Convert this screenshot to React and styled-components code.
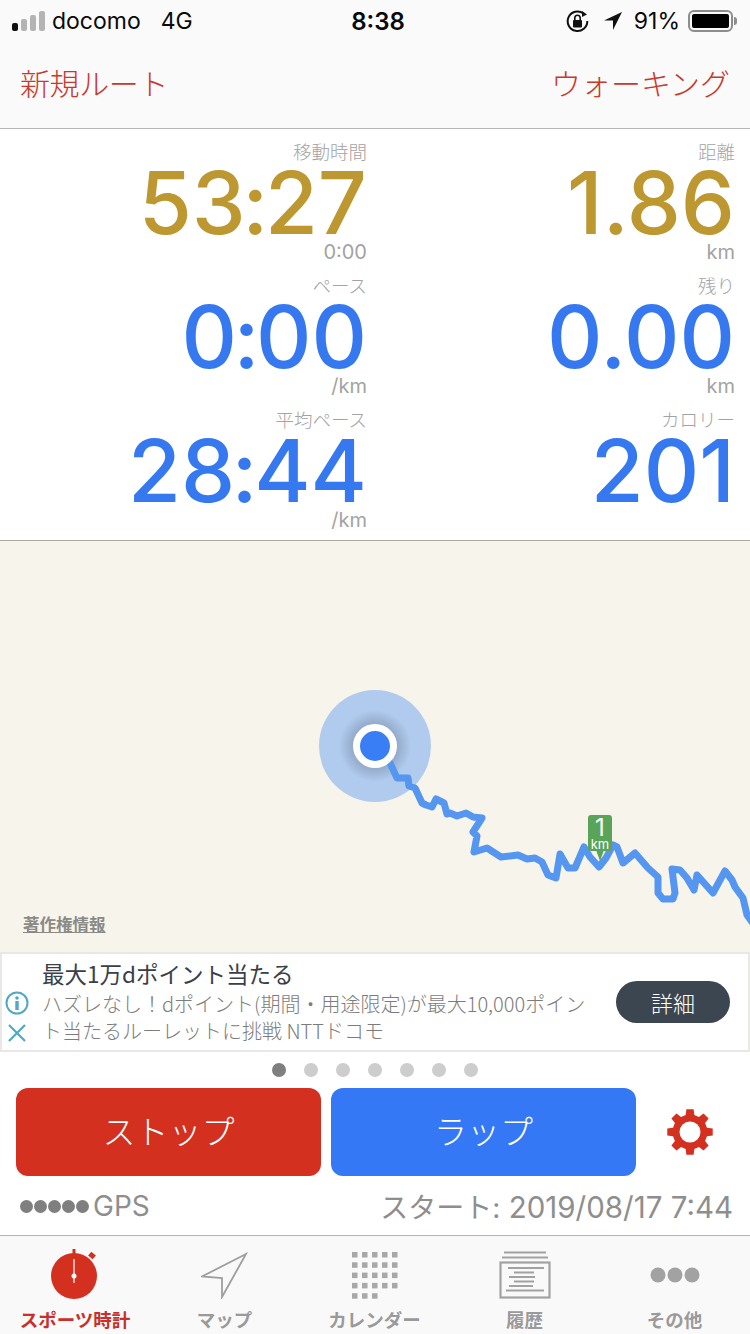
import React from "react";
import styled, { createGlobalStyle } from "styled-components";

const Global = createGlobalStyle`
  html, body { margin: 0; padding: 0; background: #fff; }
  body { font-family: Inter, "Noto Sans CJK JP", sans-serif; }
  * { box-sizing: border-box; }
`;

const Page = styled.div`
  width: 750px;
  height: 1334px;
  overflow: hidden;
  display: flex;
  flex-direction: column;
  background: #fff;
`;

const Header = styled.header`
  background: #fafafa;
  height: 129px;
  border-bottom: 1px solid #b4b4b4;
  flex: none;
`;

const StatusBar = styled.div`
  height: 42px;
  padding: 0 17px 0 12px;
  display: grid;
  grid-template-columns: 1fr auto 1fr;
  align-items: center;
  color: #0a0a0a;
  font-size: 23px;
`;

const StatusLeft = styled.div`
  display: flex;
  align-items: center;
  gap: 7px;
`;

const Carrier = styled.span`
  margin-right: 13px;
`;

const Time = styled.div`
  font-size: 24px;
  font-weight: 600;
  padding-left: 11px;
`;

const StatusRight = styled.div`
  display: flex;
  justify-content: flex-end;
  align-items: center;
`;

const Percent = styled.span`
  margin: 0 8px 0 12px;
`;

const Battery = styled.div`
  width: 45px;
  height: 22px;
  border: 2px solid #8c8c8c;
  border-radius: 6px;
  padding: 2px;
  position: relative;
  &::after {
    content: "";
    position: absolute;
    right: -6px;
    top: 5px;
    width: 3px;
    height: 8px;
    border-radius: 0 3px 3px 0;
    background: #8c8c8c;
  }
`;

const BatteryFill = styled.div`
  height: 100%;
  background: #000;
  border-radius: 2px;
`;

const NavBar = styled.nav`
  height: 86px;
  padding: 0 20px 6px 20px;
  display: flex;
  justify-content: space-between;
  align-items: center;
  color: #c9382c;
  font-family: "Noto Sans CJK JP", sans-serif;
  font-size: 30px;
  font-weight: 300;
`;

const NavRoute = styled.span`
  letter-spacing: -0.4px;
`;

const Stats = styled.section`
  flex: none;
  height: 412px;
  padding: 10px 15px 0 0;
  display: grid;
  grid-template-columns: 367px 1fr;
  grid-auto-rows: 134px;
  border-bottom: 1px solid #a8a8a0;
`;

const Stat = styled.div`
  text-align: right;
`;

const StatLabel = styled.div`
  height: 24px;
  line-height: 24px;
  font-family: "Noto Sans CJK JP", sans-serif;
  font-weight: 300;
  font-size: 18.5px;
  color: #a3a3a3;
`;

const StatValue = styled.div`
  height: 77px;
  line-height: 80px;
  font-size: 86px;
  font-weight: 450;
  color: ${(p) => (p.$tone === "gold" ? "#bd9730" : "#3578f0")};
`;

const Colon = styled.span`
  margin: 0 -3.5px;
`;

const StatSub = styled.div`
  height: 24px;
  line-height: 24px;
  font-size: 20px;
  color: #a3a3a3;
`;

const MapArea = styled.section`
  position: relative;
  flex: none;
  height: 411px;
  background: #f7f4ec;
  overflow: hidden;
`;

const Halo = styled.div`
  position: absolute;
  left: 319px;
  top: 149px;
  width: 112px;
  height: 112px;
  border-radius: 50%;
  background: radial-gradient(circle, #94abca 0, #94abca 22px, #b0cbee 36px);
`;

const RouteSvg = styled.svg`
  position: absolute;
  inset: 0;
  width: 750px;
  height: 411px;
`;

const Dot = styled.div`
  position: absolute;
  left: 353px;
  top: 183px;
  width: 44px;
  height: 44px;
  border-radius: 50%;
  background: #3a7ef6;
  border: 7px solid #fff;
`;

const Pin = styled.div`
  position: absolute;
  left: 588px;
  top: 274px;
  width: 24px;
  height: 36px;
  border-radius: 3px;
  background: #5aa45a;
  color: #fff;
  text-align: center;
  &::after {
    content: "";
    position: absolute;
    left: 8px;
    top: 35px;
    border-left: 4px solid transparent;
    border-right: 4px solid transparent;
    border-top: 11px solid #5aa45a;
  }
`;

const PinNum = styled.div`
  font-size: 24px;
  line-height: 23px;
  margin-top: 1px;
`;

const PinUnit = styled.div`
  font-size: 13px;
  line-height: 11px;
`;

const Attribution = styled.div`
  position: absolute;
  left: 23px;
  top: 373px;
  font-family: "Noto Sans CJK JP", sans-serif;
  font-size: 16.5px;
  line-height: 20px;
  font-weight: 700;
  color: #8a8a86;
  text-decoration: underline;
`;

const Ad = styled.section`
  flex: none;
  height: 100px;
  background: #fff;
  border: 2px solid #e8e8e6;
  display: grid;
  grid-template-columns: 30px 1fr auto;
  font-family: "Noto Sans CJK JP", sans-serif;
`;

const AdIcons = styled.div`
  display: flex;
  flex-direction: column;
  align-items: center;
  padding-top: 37px;
  gap: 8px;
`;

const AdText = styled.div`
  padding: 3px 0 0 10px;
`;

const AdTitle = styled.div`
  font-size: 22.5px;
  line-height: 32px;
  font-weight: 400;
  color: #3a4048;
`;

const AdBody = styled.div`
  width: 550px;
  margin-top: 1px;
  font-size: 20px;
  line-height: 27px;
  font-weight: 300;
  color: #7c7c7c;
`;

const AdAction = styled.div`
  display: flex;
  align-items: center;
  padding: 0 18px 0 0;
`;

const AdButton = styled.button`
  width: 114px;
  height: 42px;
  border: 0;
  padding: 0;
  border-radius: 21px;
  background: #3b4650;
  color: #fff;
  font-family: inherit;
  font-size: 22px;
  font-weight: 300;
`;

const Pager = styled.div`
  flex: none;
  height: 36px;
  display: flex;
  justify-content: center;
  align-items: center;
  gap: 18px;
`;

const PagerDot = styled.span`
  width: 14px;
  height: 14px;
  border-radius: 50%;
  background: ${(p) => (p.$active ? "#7f7f7f" : "#cdcdcd")};
`;

const Controls = styled.div`
  flex: none;
  height: 88px;
  padding-left: 16px;
  display: grid;
  grid-template-columns: 305px 305px 1fr;
  column-gap: 10px;
`;

const BigButton = styled.button`
  border: 0;
  border-radius: 12px;
  padding: 0 0 4px;
  background: ${(p) => p.$bg};
  color: #fff;
  font-family: "Noto Sans CJK JP", sans-serif;
  font-size: 33px;
  font-weight: 300;
`;

const GearSlot = styled.div`
  display: flex;
  align-items: center;
  justify-content: center;
  padding-right: 16px;
`;

const InfoRow = styled.div`
  flex: none;
  height: 59px;
  padding: 1px 17px 0 20px;
  display: flex;
  justify-content: space-between;
  align-items: center;
  font-size: 28px;
  color: #8e8e8e;
`;

const GpsGroup = styled.div`
  display: flex;
  align-items: center;
  gap: 4px;
`;

const GpsDots = styled.div`
  display: flex;
  gap: 1px;
`;

const GpsDot = styled.span`
  width: 13px;
  height: 13px;
  border-radius: 50%;
  background: #7f7f7f;
`;

const StartText = styled.div`
  font-size: 29.5px;
`;

const StartLabel = styled.span`
  font-size: 28px;
`;

const TabBar = styled.nav`
  flex: 1;
  background: #f9f9f9;
  border-top: 1px solid #b4b4b4;
  display: grid;
  grid-template-columns: 150px 149px 151px 149px 151px;
`;

const Tab = styled.div`
  display: flex;
  flex-direction: column;
  align-items: center;
  padding-top: 13px;
`;

const TabIcon = styled.div`
  height: 52px;
  display: flex;
  align-items: center;
  justify-content: center;
`;

const TabLabel = styled.div`
  margin-top: 5px;
  font-family: "Noto Sans CJK JP", sans-serif;
  font-size: 18.5px;
  line-height: 26px;
  font-weight: 700;
  color: ${(p) => (p.$active ? "#c9302a" : "#9a9a9a")};
`;

const routePoints =
  "390,763 397,778 408,778 409,786 415,788 422,803 426,805 432,807 436,799 444,803 447,814 450,813 457,816 466,813 473,817 482,818 473,832 477,836 474,852 487,848 501,857 518,855 527,859 535,858 542,862 548,875 556,878 560,854 568,868 575,868 584,847 590,857 599,867 606,858 613,845 617,847 623,863 635,853 648,868 658,877 658,893 663,899 673,899 675,893 672,869 680,870 687,878 694,890 697,875 713,893 725,871 732,880 735,887 743,898 747,915 752,922";

function gearPath(cx, cy, teeth, rOut, rIn) {
  const pts = [];
  const step = (Math.PI * 2) / teeth;
  for (let i = 0; i < teeth; i++) {
    const a = i * step - Math.PI / 2;
    const w = step * 0.2;
    const g = step * 0.32;
    [[a - g, rIn], [a - w, rOut], [a + w, rOut], [a + g, rIn]].forEach(([t, r]) =>
      pts.push(`${(cx + r * Math.cos(t)).toFixed(2)} ${(cy + r * Math.sin(t)).toFixed(2)}`)
    );
  }
  return `M${pts.join("L")}Z`;
}

const Signal = () => (
  <svg width="33" height="22" viewBox="0 0 33 22">
    <rect x="0" y="13" width="6" height="8" rx="2" fill="#111" />
    <rect x="9" y="9" width="6" height="12" rx="2" fill="#b4b4b4" />
    <rect x="18" y="5" width="6" height="16" rx="2" fill="#b4b4b4" />
    <rect x="27" y="1" width="6" height="20" rx="2" fill="#b4b4b4" />
  </svg>
);

const LockRotate = () => (
  <svg width="23" height="23" viewBox="0 0 23 23">
    <path d="M17.5 3.5A9.8 9.8 0 1 0 21.3 11" fill="none" stroke="#111" strokeWidth="2" />
    <path d="M16 1l5 3.5-5 2.5z" fill="#111" />
    <rect x="7" y="10" width="9" height="7.5" rx="1" fill="#111" />
    <path d="M8.8 10V8a2.7 2.7 0 0 1 5.4 0v2" fill="none" stroke="#111" strokeWidth="1.6" />
  </svg>
);

const LocationArrow = () => (
  <svg width="18" height="18" viewBox="0 0 18 18" style={{ marginLeft: 15 }}>
    <path d="M18 0L0 8.5h9V18z" fill="#111" />
  </svg>
);

const Gear = () => (
  <svg width="46" height="46" viewBox="0 0 46 46">
    <path d={gearPath(23, 23, 8, 23, 17.5)} fill="#d33020" />
    <circle cx="23" cy="23" r="10.5" fill="#fff" />
  </svg>
);

const Stopwatch = () => (
  <svg width="52" height="52" viewBox="0 0 52 52">
    <rect x="23.5" y="0" width="3" height="5" fill="#d33020" />
    <rect x="40" y="4" width="6" height="5" transform="rotate(40 43 6.5)" fill="#d33020" />
    <circle cx="25" cy="27" r="23" fill="#d33020" />
    <rect x="24.4" y="10" width="1.2" height="24" fill="#fff" />
    <circle cx="25" cy="27" r="2.5" fill="#fff" />
  </svg>
);

const MapIcon = () => (
  <svg width="47" height="47" viewBox="0 0 47 47">
    <path d="M45 2L1 24.5l20 1.5L21 45z" fill="none" stroke="#9e9e9e" strokeWidth="1.8" strokeLinejoin="miter" />
  </svg>
);

const CalendarIcon = () => {
  const cells = [];
  for (let r = 0; r < 5; r++) {
    for (let c = 0; c < (r === 4 ? 3 : 5); c++) {
      cells.push(<rect key={`${r}-${c}`} x={c * 10} y={r * 10.3} width="5.5" height="5.5" fill="#a8a8a8" />);
    }
  }
  return (
    <svg width="46" height="47" viewBox="0 0 46 47">
      {cells}
    </svg>
  );
};

const HistoryIcon = () => (
  <svg width="52" height="48" viewBox="0 0 52 48" fill="none" stroke="#a2a2a2">
    <path d="M5 1.5h42M3 6.5h46" strokeWidth="2" />
    <rect x="1.5" y="11.5" width="49" height="35" strokeWidth="2.2" />
    <path d="M9 17h36M15 21.5h20M10 26h26M15 30.5h20M10 35h24M7 39.5h38" strokeWidth="1.8" />
  </svg>
);

const MoreIcon = () => (
  <svg width="50" height="16" viewBox="0 0 50 16">
    <circle cx="8" cy="8" r="7.5" fill="#a2a2a2" />
    <circle cx="25" cy="8" r="7.5" fill="#a2a2a2" />
    <circle cx="42" cy="8" r="7.5" fill="#a2a2a2" />
  </svg>
);

const InfoIcon = () => (
  <svg width="24" height="24" viewBox="0 0 24 24">
    <circle cx="12" cy="12" r="10.5" fill="none" stroke="#4fa8c4" strokeWidth="2" />
    <circle cx="12" cy="7" r="1.8" fill="#4fa8c4" />
    <rect x="10.3" y="10" width="3.4" height="9" fill="#4fa8c4" />
  </svg>
);

const CloseIcon = () => (
  <svg width="20" height="20" viewBox="0 0 20 20">
    <path d="M2 2l16 16M18 2L2 18" stroke="#4fa8c4" strokeWidth="2.2" />
  </svg>
);

const stats = [
  { label: "移動時間", value: ["53", "27"], sub: "0:00", tone: "gold" },
  { label: "距離", value: ["1.86"], sub: "km", tone: "gold" },
  { label: "ペース", value: ["0", "00"], sub: "/km", tone: "blue" },
  { label: "残り", value: ["0.00"], sub: "km", tone: "blue" },
  { label: "平均ペース", value: ["28", "44"], sub: "/km", tone: "blue" },
  { label: "カロリー", value: ["201"], sub: "", tone: "blue" },
];

const tabs = [
  { label: "スポーツ時計", icon: <Stopwatch />, active: true },
  { label: "マップ", icon: <MapIcon /> },
  { label: "カレンダー", icon: <CalendarIcon /> },
  { label: "履歴", icon: <HistoryIcon /> },
  { label: "その他", icon: <MoreIcon /> },
];

export default function App() {
  return (
    <Page>
      <Global />
      <Header>
        <StatusBar>
          <StatusLeft>
            <Signal />
            <Carrier>docomo</Carrier>
            <span>4G</span>
          </StatusLeft>
          <Time>8:38</Time>
          <StatusRight>
            <LockRotate />
            <LocationArrow />
            <Percent>91%</Percent>
            <Battery>
              <BatteryFill />
            </Battery>
          </StatusRight>
        </StatusBar>
        <NavBar>
          <NavRoute>新規ルート</NavRoute>
          <span>ウォーキング</span>
        </NavBar>
      </Header>
      <Stats>
        {stats.map((s) => (
          <Stat key={s.label}>
            <StatLabel>{s.label}</StatLabel>
            <StatValue $tone={s.tone}>
              {s.value.length === 2 ? (
                <>
                  {s.value[0]}
                  <Colon>:</Colon>
                  {s.value[1]}
                </>
              ) : (
                s.value[0]
              )}
            </StatValue>
            <StatSub>{s.sub}</StatSub>
          </Stat>
        ))}
      </Stats>
      <MapArea>
        <Halo />
        <RouteSvg viewBox="0 541 750 411">
          <polyline points={routePoints} fill="none" stroke="#5596f0" strokeWidth="7" strokeLinejoin="round" strokeLinecap="round" />
        </RouteSvg>
        <Dot />
        <Pin>
          <PinNum>1</PinNum>
          <PinUnit>km</PinUnit>
        </Pin>
        <Attribution>著作権情報</Attribution>
      </MapArea>
      <Ad>
        <AdIcons>
          <InfoIcon />
          <CloseIcon />
        </AdIcons>
        <AdText>
          <AdTitle>最大1万dポイント当たる</AdTitle>
          <AdBody>ハズレなし！dポイント(期間・用途限定)が最大10,000ポイント当たるルーレットに挑戦 NTTドコモ</AdBody>
        </AdText>
        <AdAction>
          <AdButton>詳細</AdButton>
        </AdAction>
      </Ad>
      <Pager>
        {[0, 1, 2, 3, 4, 5, 6].map((i) => (
          <PagerDot key={i} $active={i === 0} />
        ))}
      </Pager>
      <Controls>
        <BigButton $bg="#d33020">ストップ</BigButton>
        <BigButton $bg="#3578f5">ラップ</BigButton>
        <GearSlot>
          <Gear />
        </GearSlot>
      </Controls>
      <InfoRow>
        <GpsGroup>
          <GpsDots>
            {[0, 1, 2, 3, 4].map((i) => (
              <GpsDot key={i} />
            ))}
          </GpsDots>
          <span>GPS</span>
        </GpsGroup>
        <StartText>
          <StartLabel>スタート:</StartLabel> 2019/08/17 7:44
        </StartText>
      </InfoRow>
      <TabBar>
        {tabs.map((t) => (
          <Tab key={t.label}>
            <TabIcon>{t.icon}</TabIcon>
            <TabLabel $active={t.active}>{t.label}</TabLabel>
          </Tab>
        ))}
      </TabBar>
    </Page>
  );
}
